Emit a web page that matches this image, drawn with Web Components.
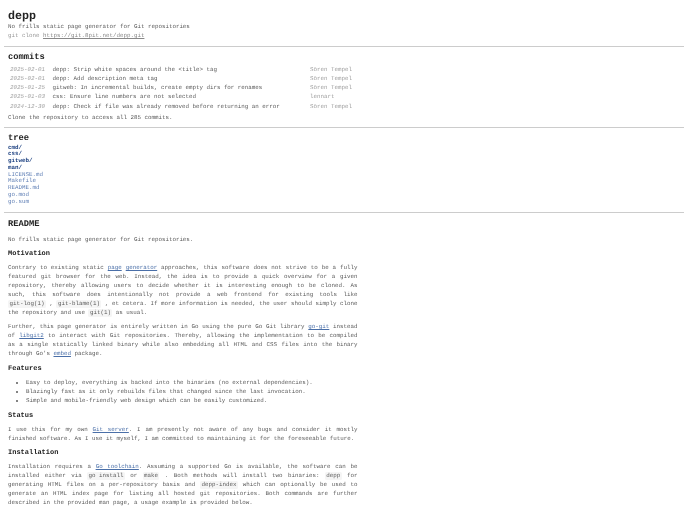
<!DOCTYPE html>
<html lang="en"><head><meta charset="utf-8"><title>depp</title>
<style>html,body{margin:0;background:#fff}body{font:5.84px/9.2px "Liberation Mono",monospace;color:#5a5a5a;text-rendering:geometricPrecision}</style>
</head><body>
<git-page>
<page-section h="depp" level="1" style="--pt:8.7px;--pb:5.2px;--hb:.65px">
  <div style="line-height:8.7px">No frills static page generator for Git repositories</div>
  <div style="line-height:8.7px;color:#999">git clone <md-link style="color:#888">https://git.8pit.net/depp.git</md-link></div>
</page-section>
<page-section h="commits" level="2" style="--pt:4.6px;--pb:5.1px;--hb:3px">
  <commit-row date="2025-02-01" author="Sören Tempel">depp: Strip white spaces around the &lt;title&gt; tag</commit-row>
  <commit-row date="2025-02-01" author="Sören Tempel">depp: Add description meta tag</commit-row>
  <commit-row date="2025-01-25" author="Sören Tempel">gitweb: In incremental builds, create empty dirs for renames</commit-row>
  <commit-row date="2025-01-03" author="lennart">css: Ensure line numbers are not selected</commit-row>
  <commit-row date="2024-12-30" author="Sören Tempel">depp: Check if file was already removed before returning an error</commit-row>
  <div style="margin-top:1.8px">Clone the repository to access all 285 commits.</div>
</page-section>
<page-section h="tree" level="2" style="--pt:4.8px;--pb:6.3px;--hb:2px">
  <tree-entry dir>cmd/</tree-entry><tree-entry dir>css/</tree-entry><tree-entry dir>gitweb/</tree-entry><tree-entry dir>man/</tree-entry>
  <tree-entry>LICENSE.md</tree-entry><tree-entry>Makefile</tree-entry><tree-entry>README.md</tree-entry><tree-entry>go.mod</tree-entry><tree-entry>go.sum</tree-entry>
</page-section>
<page-section h="README" level="2" last style="--pt:5.8px;--pb:0px;--hb:7.3px">
  <read-me>
    <md-p>No frills static page generator for Git repositories.</md-p>
    <md-h>Motivation</md-h>
    <md-p>Contrary to existing static <md-link>page</md-link> <md-link>generator</md-link> approaches, this software does not strive to be a fully featured git browser for the web. Instead, the idea is to provide a quick overview for a given repository, thereby allowing users to decide whether it is interesting enough to be cloned. As such, this software does intentionally not provide a web frontend for existing tools like <md-code>git-log(1)</md-code> , <md-code>git-blame(1)</md-code> , et cetera. If more information is needed, the user should simply clone the repository and use <md-code>git(1)</md-code> as usual.</md-p>
    <md-p>Further, this page generator is entirely written in Go using the pure Go Git library <md-link>go-git</md-link> instead of <md-link>libgit2</md-link> to interact with Git repositories. Thereby, allowing the implementation to be compiled as a single statically linked binary while also embedding all HTML and CSS files into the binary through Go's <md-link>embed</md-link> package.</md-p>
    <md-h>Features</md-h>
    <md-list>
      <md-item>Easy to deploy, everything is backed into the binaries (no external dependencies).</md-item>
      <md-item>Blazingly fast as it only rebuilds files that changed since the last invocation.</md-item>
      <md-item>Simple and mobile-friendly web design which can be easily customized.</md-item>
    </md-list>
    <md-h>Status</md-h>
    <md-p>I use this for my own <md-link>Git server</md-link>. I am presently not aware of any bugs and consider it mostly finished software. As I use it myself, I am committed to maintaining it for the foreseeable future.</md-p>
    <md-h>Installation</md-h>
    <md-p>Installation requires a <md-link>Go toolchain</md-link>. Assuming a supported Go is available, the software can be installed either via <md-code>go install</md-code> or <md-code>make</md-code> . Both methods will install two binaries: <md-code>depp</md-code> for generating HTML files on a per-repository basis and <md-code>depp-index</md-code> which can optionally be used to generate an HTML index page for listing all hosted git repositories. Both commands are further described in the provided man page, a usage example is provided below.</md-p>
  </read-me>
</page-section>
</git-page>
<script>
function def(name, css, html){
  customElements.define(name, class extends HTMLElement{
    connectedCallback(){
      if(this.shadowRoot) return;
      const r=this.attachShadow({mode:'open'});
      r.innerHTML='<style>'+css+'</style>'+(typeof html==='function'?html(this):html);
    }
  });
}
const esc=s=>String(s).replace(/&/g,'&amp;').replace(/</g,'&lt;');
def('git-page',':host{display:block;height:512px;overflow:hidden;filter:blur(.3px)}','<slot></slot>');
def('page-section',`
  :host{display:block;margin:0 4px;padding:var(--pt) 4px var(--pb);border-bottom:1.5px solid #ccc}
  :host([last]){border-bottom:0}
  h1,h2{margin:0;font-weight:700;color:#222;font-family:inherit}
  h1{font-size:11.68px;line-height:14px;margin-bottom:var(--hb)}
  h2{font-size:8.76px;line-height:10px;margin-bottom:var(--hb)}
`,t=>{const l=t.getAttribute('level');return `<h${l}>${esc(t.getAttribute('h'))}</h${l}><slot></slot>`});
def('commit-row',`
  :host{display:grid;grid-template-columns:35px 250px auto;column-gap:7.5px;padding-left:2px;line-height:9.25px}
  .d{font-style:italic;color:#a0a0a0}.a{color:#a0a0a0}
`,t=>`<span class="d">${esc(t.getAttribute('date'))}</span><span><slot></slot></span><span class="a">${esc(t.getAttribute('author'))}</span>`);
def('tree-entry',`
  :host{display:block;line-height:6.75px;color:#5f7fb5}
  :host([dir]){font-weight:700;color:#1c4080}
`,'<slot></slot>');
def('read-me',':host{display:block;width:349.5px}','<slot></slot>');
def('md-p',':host{display:block;text-align:justify;line-height:8.95px;margin-bottom:5.4px}','<slot></slot>');
def('md-h',':host{display:block;font-weight:700;font-size:7px;line-height:8px;color:#222;margin:0 0 6.2px}','<slot></slot>');
def('md-list',':host{display:block;padding-left:18px;margin-bottom:6px}','<slot></slot>');
def('md-item',':host{display:list-item;list-style:disc;line-height:8.95px}','<slot></slot>');
def('md-link',':host{display:inline;color:#4a6fa8;text-decoration:underline}','<slot></slot>');
def('md-code',':host{display:inline-block;line-height:7.5px;background:#f5f5f5;padding:0 1.45px;border-radius:1.5px;white-space:nowrap}','<slot></slot>');
</script>
</body></html>
